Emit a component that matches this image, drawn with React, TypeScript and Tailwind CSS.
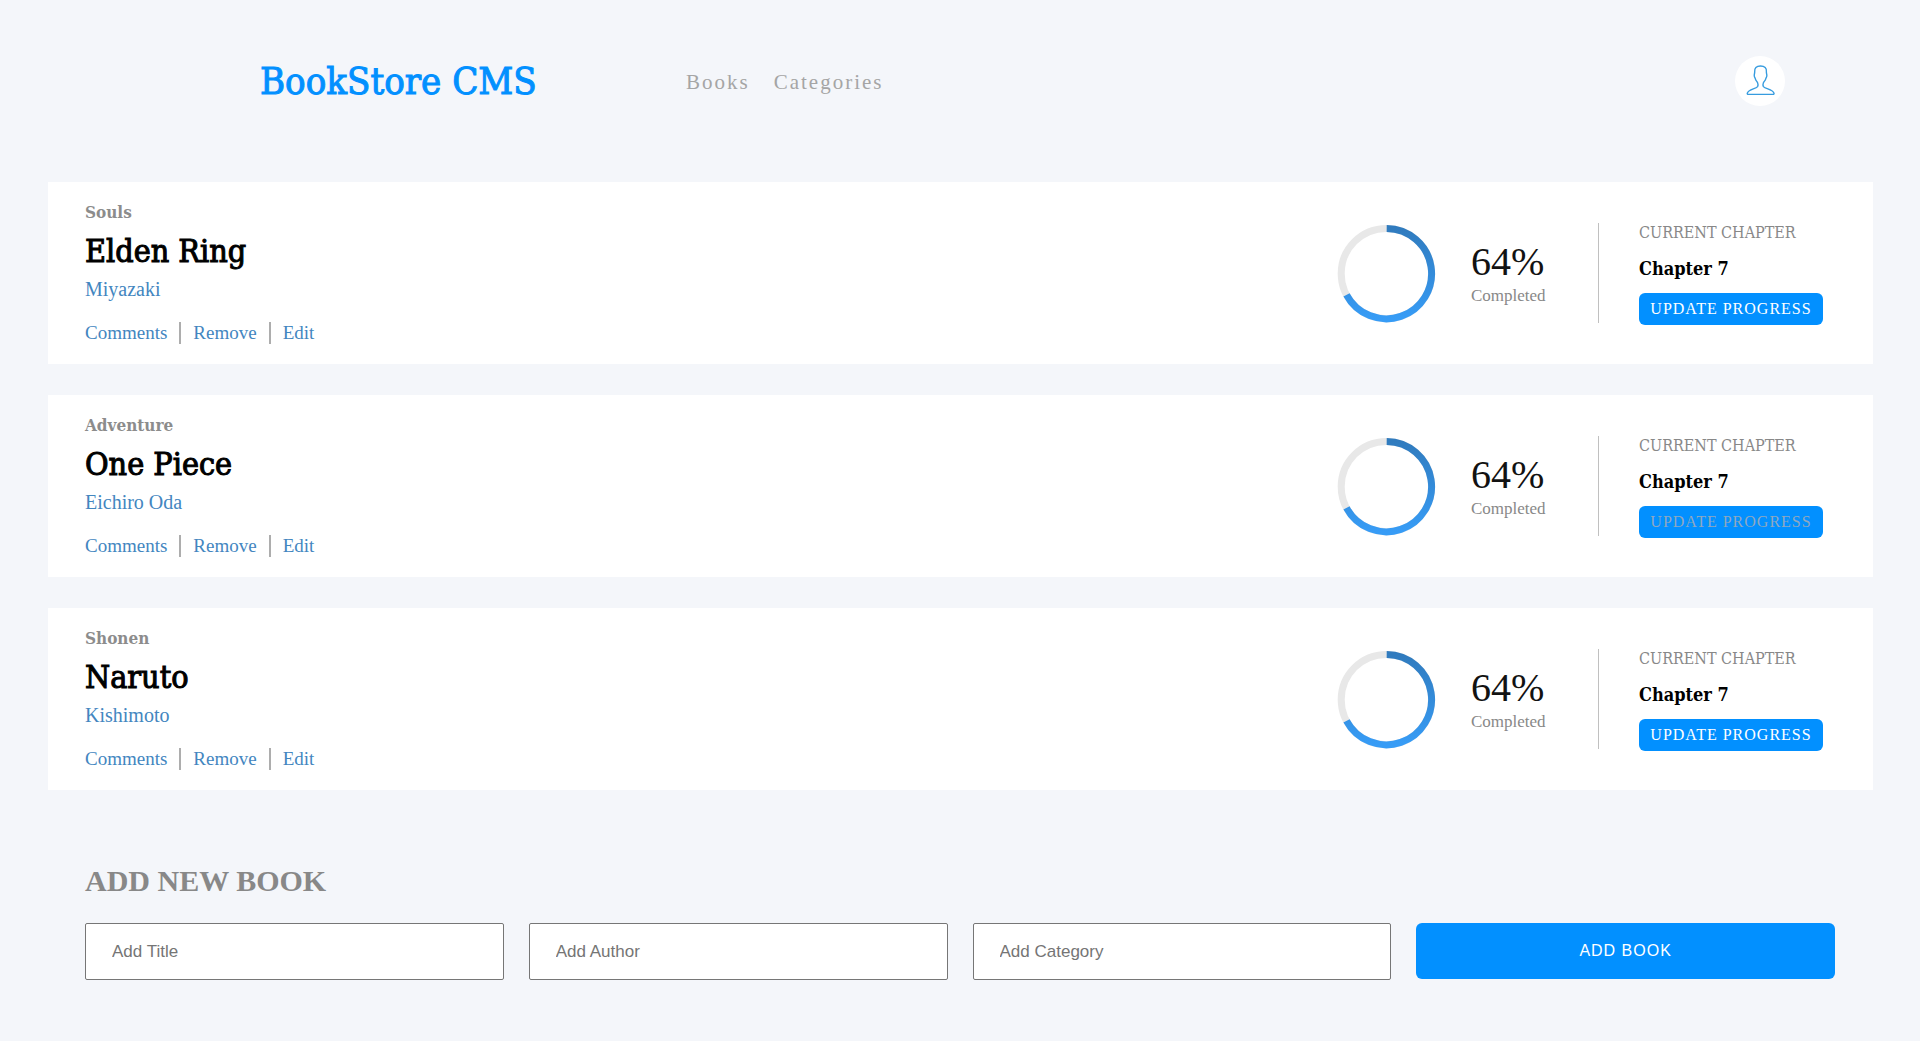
type Book = { category: string; title: string; author: string; visited?: boolean };

const books: Book[] = [
  { category: 'Souls', title: 'Elden Ring', author: 'Miyazaki' },
  { category: 'Adventure', title: 'One Piece', author: 'Eichiro Oda', visited: true },
  { category: 'Shonen', title: 'Naruto', author: 'Kishimoto' },
];

function UserIcon() {
  return (
    <svg viewBox="0 0 50 50" className="size-full" fill="none" stroke="#379cdf" strokeWidth="1.4" strokeLinecap="round" strokeLinejoin="round" aria-hidden="true">
      <path d="M25.5 10C21.3 10 19.4 12 19.7 15.8C19.8 17.4 19 18.4 19.3 20C19.5 21.3 20.1 21.7 20.3 22.6C20.7 24.6 22 25.5 22.6 26.8C23.1 28 23.1 29.6 22.6 30.6C20.5 33.2 13.6 33 12.3 37.2C12.1 38 12.5 38.4 13.2 38.4H38.1C38.8 38.4 39.2 38 39 37.2C37.6 33 30.6 33.2 28.4 30.6C27.9 29.6 27.9 28 28.4 26.8C29 25.5 30.4 24.6 30.8 22.6C31 21.7 31.6 21.3 31.8 20C32.1 18.4 31.2 17.4 31.4 15.8C31.8 12 29.7 10 25.5 10Z" />
    </svg>
  );
}

function ProgressRing({ id }: { id: string }) {
  return (
    <svg viewBox="0 0 100 100" className="size-25 shrink-0" fill="none" strokeWidth="7" role="img" aria-label="64% completed">
      <defs>
        <linearGradient id={id} x1="0" y1="0" x2="0" y2="1">
          <stop offset="0" stopColor="#307bbe" />
          <stop offset="1" stopColor="#379cf6" />
        </linearGradient>
      </defs>
      <circle cx="50.4" cy="50.6" r="45.2" stroke="#e8e8e8" />
      <path d="M50.7 5.4A45.2 45.2 0 1 1 10.5 71.9" stroke={`url(#${id})`} />
    </svg>
  );
}

function BookCard({ category, title, author, visited }: Book) {
  return (
    <li className="flex items-center bg-white pt-[18px] pr-[50px] pb-[19px] pl-[37px]">
      <div className="flex grow flex-col">
        <p className="font-['Roboto_Slab','DejaVu_Serif_Condensed','DejaVu_Serif',serif] text-[17px] leading-6 font-bold text-[#8c8c8c]">{category}</p>
        <h2 className="mt-[9px] font-['Roboto_Slab','DejaVu_Serif_Condensed','DejaVu_Serif',serif] text-[32px] leading-9 font-medium text-black [-webkit-text-stroke:1px_currentColor]">{title}</h2>
        <p className="mt-[8px] text-[20px] leading-6 text-[#4386bf]">{author}</p>
        <div className="mt-5 flex items-center text-[19px] leading-6 text-[#4386bf]">
          <button type="button" className="pr-3">Comments</button>
          <button type="button" className="border-x-2 border-[#adadad] px-3 leading-[22px]">Remove</button>
          <button type="button" className="pl-3">Edit</button>
        </div>
      </div>
      <ProgressRing id={`ring-${category}`} />
      <div className="ml-[35px] w-[127px] pt-[2px]">
        <p className="text-[40px] leading-11 text-[#121212]">64%</p>
        <p className="text-[17px] leading-6 text-[#888888]">Completed</p>
      </div>
      <div className="h-25 border-l border-[#c0c0c0] pl-[40px]">
        <p className="font-['Roboto_Slab','DejaVu_Serif_Condensed','DejaVu_Serif',serif] text-[16px] leading-5 text-[#888888]">CURRENT CHAPTER</p>
        <p className="mt-4 font-['Roboto_Slab','DejaVu_Serif_Condensed','DejaVu_Serif',serif] text-[18px] leading-5 font-bold text-black">Chapter 7</p>
        <button type="button" className={`mt-[14px] flex h-8 w-[184px] items-center justify-center rounded-[6px] bg-[#0290ff] text-[16px] tracking-[1px] ${visited ? 'text-[#8fa8c0]' : 'text-white'}`}>
          UPDATE PROGRESS
        </button>
      </div>
    </li>
  );
}

export default function App() {
  return (
    <div className="min-h-screen bg-[#f4f6fa] font-['Liberation_Serif',serif]">
      <header className="flex items-center pt-14 pr-[135px] pl-[260px]">
        <h1 className="w-[426px] font-['Roboto_Slab','DejaVu_Serif_Condensed','DejaVu_Serif',serif] text-[38px] leading-[50px] font-medium text-[#0290ff] [-webkit-text-stroke:1px_currentColor]">BookStore CMS</h1>
        <nav className="flex grow gap-6 pt-[2px] text-[21px] leading-6 tracking-[2px] text-[#a5a5a5]">
          <a href="#books">Books</a>
          <a href="#categories">Categories</a>
        </nav>
        <button type="button" aria-label="Account" className="size-[50px] shrink-0 rounded-full bg-white">
          <UserIcon />
        </button>
      </header>
      <main className="mt-[76px] mr-[47px] ml-12">
        <ul id="books" className="flex flex-col gap-[31px]">
          {books.map((book) => <BookCard key={book.title} {...book} />)}
        </ul>
        <section className="mt-[73px] pr-[38px] pl-[37px]">
          <h2 className="text-[30px] leading-9 font-bold text-[#888888]">ADD NEW BOOK</h2>
          <form className="mt-6 grid grid-cols-4 items-start gap-[25px] font-['Liberation_Sans',sans-serif] text-[17px]">
            {['Title', 'Author', 'Category'].map((field) => (
              <input key={field} type="text" aria-label={`Add ${field}`} placeholder={`Add ${field}`} className="h-[57px] w-full rounded-[2px] border border-[#767676] bg-white px-[26px] placeholder:text-[#757575]" />
            ))}
            <button type="button" className="h-14 rounded-[6px] bg-[#0290ff] text-[16px] tracking-[1px] text-white">ADD BOOK</button>
          </form>
        </section>
      </main>
    </div>
  );
}
